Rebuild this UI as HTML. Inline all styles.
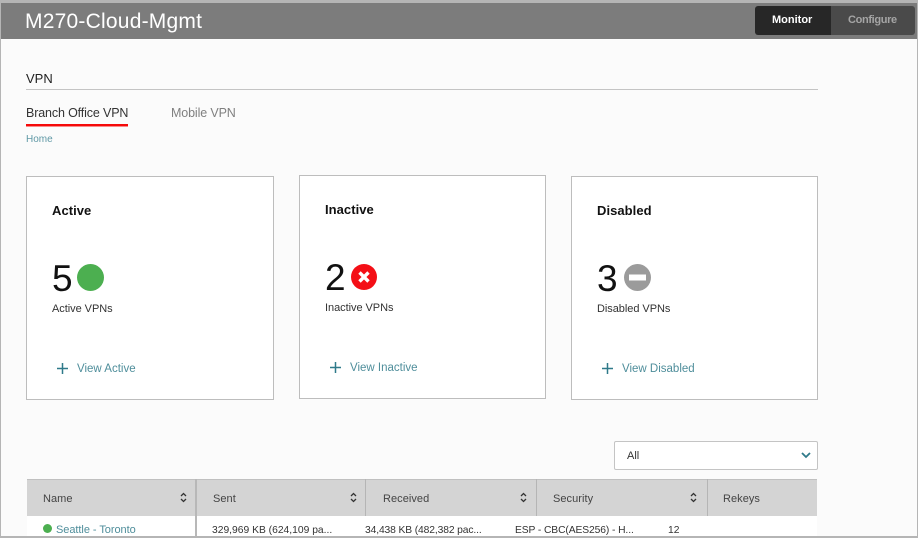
<!DOCTYPE html>
<html><head><meta charset="utf-8"><style>
html,body{margin:0;padding:0}
body{width:918px;height:538px;overflow:hidden;position:relative;background:#b5b5b5;font-family:"Liberation Sans",sans-serif}
div,span.a,svg{position:absolute}
.t{position:absolute;white-space:nowrap;line-height:1}
.card{background:#fff;border:1px solid #bdbdbd;box-sizing:border-box}
.ti{font-size:13px;font-weight:bold;color:#111;letter-spacing:.05px}
.num{font-size:37px;color:#111}
.sub{font-size:11px;color:#333;letter-spacing:-.05px}
.lnk{font-size:11.5px;color:#4f8e9b}
.h{font-size:11px;color:#444;letter-spacing:.05px}
.c{font-size:10.3px;color:#333}
</style></head><body>
<div style="left:1px;top:3px;width:916px;height:533px;background:#fbfbfb"></div>
<div style="left:1px;top:3px;width:916px;height:36px;background:#7c7c7c"></div>
<span class="t" style="left:25px;top:11px;font-size:21px;color:#fff;letter-spacing:.22px">M270-Cloud-Mgmt</span>
<div style="left:755px;top:6px;width:76px;height:29px;background:#272727;border-radius:3px 0 0 3px"></div>
<div style="left:831px;top:6px;width:84px;height:29px;background:#4a4a4a;border-radius:0 3px 3px 0"></div>
<span class="t" style="left:772px;top:15px;font-size:11px;font-weight:bold;color:#fff">Monitor</span>
<span class="t" style="left:848px;top:15px;font-size:11px;font-weight:bold;color:#a5a5a5;letter-spacing:-.35px">Configure</span>

<span class="t" style="left:26px;top:72px;font-size:13px;color:#222">VPN</span>
<div style="left:26px;top:89px;width:792px;height:1px;background:#c4c4c4"></div>
<span class="t" style="left:26px;top:107px;font-size:12.5px;color:#333;letter-spacing:-.14px">Branch Office VPN</span>
<span class="t" style="left:171px;top:107px;font-size:12.5px;color:#808080;letter-spacing:-.13px">Mobile VPN</span>
<div style="left:26px;top:124px;width:102px;height:2px;background:#f50a0a"></div>
<div style="left:26px;top:126px;width:102px;height:1px;background:#f98a8a"></div>
<span class="t" style="left:26px;top:135px;font-size:10px;color:#5f98a5">Home</span>

<div class="card" style="left:26px;top:176px;width:248px;height:224px"></div>
<span class="t ti" style="left:52px;top:204px">Active</span>
<span class="t num" style="left:52px;top:260px">5</span>
<div style="left:77px;top:264px;width:27px;height:27px;border-radius:50%;background:#4caf50"></div>
<span class="t sub" style="left:52px;top:304px">Active VPNs</span>
<svg style="left:57px;top:363px" width="11" height="11"><path d="M5.5 0V11M0 5.5H11" stroke="#2f7a8a" stroke-width="1.5"/></svg>
<span class="t lnk" style="left:77px;top:364px">View Active</span>

<div class="card" style="left:299px;top:175px;width:247px;height:224px"></div>
<span class="t ti" style="left:325px;top:203px">Inactive</span>
<span class="t num" style="left:325px;top:259px">2</span>
<svg style="left:351px;top:264px" width="26" height="26"><circle cx="13" cy="13" r="13" fill="#f40f16"/><path d="M8.5 8.5L17.5 17.5M17.5 8.5L8.5 17.5" stroke="#fff" stroke-width="3.4"/></svg>
<span class="t sub" style="left:325px;top:303px">Inactive VPNs</span>
<svg style="left:330px;top:362px" width="11" height="11"><path d="M5.5 0V11M0 5.5H11" stroke="#2f7a8a" stroke-width="1.5"/></svg>
<span class="t lnk" style="left:350px;top:363px">View Inactive</span>

<div class="card" style="left:571px;top:176px;width:247px;height:224px"></div>
<span class="t ti" style="left:597px;top:204px">Disabled</span>
<span class="t num" style="left:597px;top:260px">3</span>
<svg style="left:624px;top:264px" width="27" height="27"><circle cx="13.5" cy="13.5" r="13.5" fill="#9b9b9b"/><rect x="5" y="10.5" width="17" height="6" fill="#fff"/></svg>
<span class="t sub" style="left:597px;top:304px">Disabled VPNs</span>
<svg style="left:602px;top:363px" width="11" height="11"><path d="M5.5 0V11M0 5.5H11" stroke="#2f7a8a" stroke-width="1.5"/></svg>
<span class="t lnk" style="left:622px;top:364px">View Disabled</span>

<div style="left:614px;top:441px;width:204px;height:29px;box-sizing:border-box;background:#fff;border:1px solid #c4c4c4;border-radius:2px"></div>
<span class="t" style="left:627px;top:451px;font-size:11px;color:#333">All</span>
<svg style="left:801px;top:452px" width="10" height="7"><path d="M1 1L5 5L9 1" fill="none" stroke="#2f7a8a" stroke-width="1.8"/></svg>

<div style="left:27px;top:479px;width:790px;height:57px;background:#fff"></div>
<div style="left:27px;top:479px;width:790px;height:37px;background:#d4d4d4;border-top:1px solid #c0c0c0;box-sizing:border-box"></div>
<div style="left:195px;top:479px;width:2px;height:57px;background:#b8b8b8"></div>
<div style="left:365px;top:479px;width:1px;height:37px;background:#b5b5b5"></div>
<div style="left:536px;top:479px;width:1px;height:37px;background:#b5b5b5"></div>
<div style="left:707px;top:479px;width:1px;height:37px;background:#b5b5b5"></div>
<span class="t h" style="left:43px;top:494px">Name</span>
<span class="t h" style="left:213px;top:494px">Sent</span>
<span class="t h" style="left:383px;top:494px">Received</span>
<span class="t h" style="left:553px;top:494px">Security</span>
<span class="t h" style="left:723px;top:494px">Rekeys</span>
<svg style="left:180px;top:492px" width="7" height="11"><path d="M1 4L3.5 1.5L6 4M1 7L3.5 9.5L6 7" fill="none" stroke="#333" stroke-width="1.3"/></svg>
<svg style="left:350px;top:492px" width="7" height="11"><path d="M1 4L3.5 1.5L6 4M1 7L3.5 9.5L6 7" fill="none" stroke="#333" stroke-width="1.3"/></svg>
<svg style="left:520px;top:492px" width="7" height="11"><path d="M1 4L3.5 1.5L6 4M1 7L3.5 9.5L6 7" fill="none" stroke="#333" stroke-width="1.3"/></svg>
<svg style="left:690px;top:492px" width="7" height="11"><path d="M1 4L3.5 1.5L6 4M1 7L3.5 9.5L6 7" fill="none" stroke="#333" stroke-width="1.3"/></svg>
<div style="left:43px;top:524px;width:9px;height:9px;border-radius:50%;background:#4caf50"></div>
<span class="t" style="left:56px;top:525px;font-size:11px;color:#4f8e9b;letter-spacing:-.05px">Seattle - Toronto</span>
<span class="t c" style="left:212px;top:526px">329,969 KB (624,109 pa...</span>
<span class="t c" style="left:365px;top:526px;letter-spacing:-.12px">34,438 KB (482,382 pac...</span>
<span class="t c" style="left:515px;top:526px;letter-spacing:-.1px">ESP - CBC(AES256) - H...</span>
<span class="t c" style="left:668px;top:526px">12</span>
</body></html>
